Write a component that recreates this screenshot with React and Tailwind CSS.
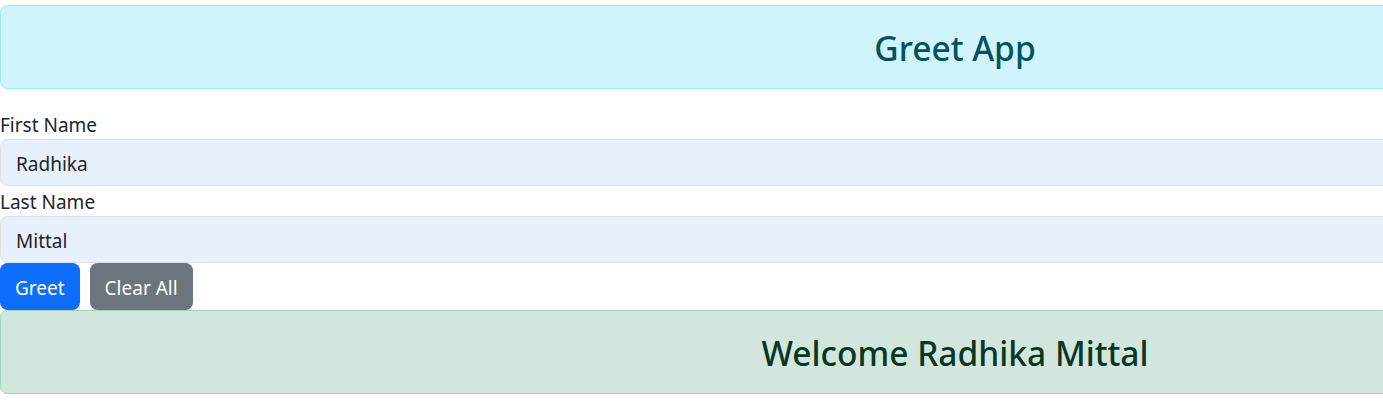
export default function App() {
  return (
    <div className="w-[1383px] h-[408px] overflow-hidden bg-white" style={{ fontFamily: '"Noto Sans", "Open Sans", sans-serif' }}>
      <div className="w-[1910px] pt-[5px] text-[#212529]">
        <div className="h-[84px] border-[1.25px] border-[#9eeaf9] bg-[#cff4fc] rounded-[7.5px] px-5 flex items-center justify-center mb-5">
          <h3 className="text-[33.5px] leading-[42px] font-medium text-[#055160] pt-[2px]">Greet App</h3>
        </div>
        <label className="block text-[19px] leading-[28px] pt-[2px]">First Name</label>
        <div className="h-[47px] border-[1.25px] border-[#dee2e6] bg-[#e8f0fe] rounded-[7.5px] px-[15px] pt-[3px] flex items-center text-[19px]">Radhika</div>
        <label className="block text-[19px] leading-[28px] pt-[2px]">Last Name</label>
        <div className="h-[47px] border-[1.25px] border-[#dee2e6] bg-[#e8f0fe] rounded-[7.5px] px-[15px] pt-[3px] flex items-center text-[19px]">Mittal</div>
        <div className="flex gap-[10px]">
          <button className="h-[47px] px-[15px] pt-[3px] rounded-[7.5px] bg-[#0d6efd] text-white text-[19px]">Greet</button>
          <button className="h-[47px] px-[15px] pt-[3px] rounded-[7.5px] bg-[#6c757d] text-white text-[19px]">Clear All</button>
        </div>
        <div className="h-[84px] border-[1.25px] border-[#a3cfbb] bg-[#d1e7dd] rounded-[7.5px] px-5 flex items-center justify-center">
          <h3 className="text-[33.5px] leading-[42px] font-medium text-[#0a3622] pt-[2px]">Welcome Radhika Mittal</h3>
        </div>
      </div>
    </div>
  );
}
